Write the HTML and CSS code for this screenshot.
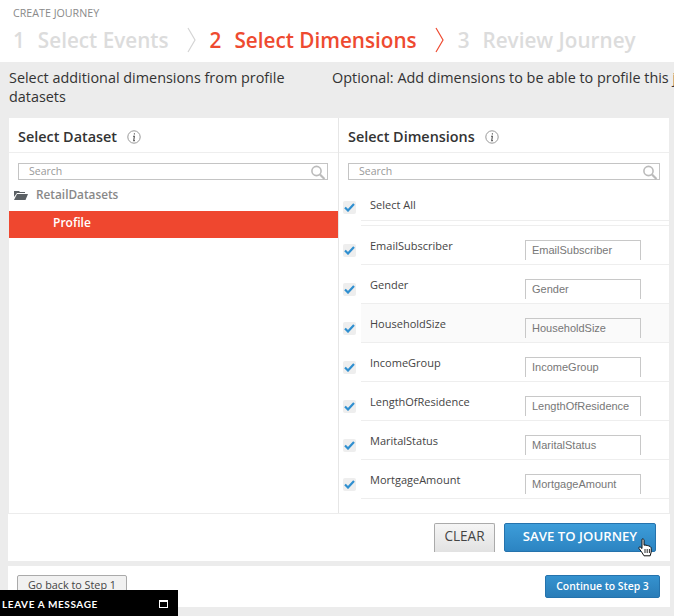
FILE: index.html
```html
<!DOCTYPE html>
<html lang="en">
<head>
  <meta charset="UTF-8" />
  <title>Create Journey</title>
  <link rel="stylesheet" href="styles.css">
</head>
<body>

  <div class="top">
    <div class="crumb">CREATE JOURNEY</div>
    <div class="steps">
      <span class="step step1">1<b>Select Events</b></span>
      <svg class="chev" width="9" height="26" viewBox="0 0 9 26"><path d="M1 1l7 12L1 25" fill="none" stroke="#d4d4d4" stroke-width="1.2"/></svg>
      <span class="step step2 active">2<b>Select Dimensions</b></span>
      <svg class="chev" width="9" height="26" viewBox="0 0 9 26"><path d="M1 1l7 12L1 25" fill="none" stroke="#ee4a30" stroke-width="1.2"/></svg>
      <span class="step step3">3<b>Review Journey</b></span>
    </div>
  </div>

  <div class="main">
    <div class="intro">
      <p class="intro-left">Select additional dimensions from profile datasets</p>
      <p class="intro-right">Optional: Add dimensions to be able to profile this journey</p>
    </div>

    <div class="panel">
      <div class="col col-left">
        <div class="col-head">Select Dataset
          <svg class="info" width="14" height="14" viewBox="0 0 14 14"><circle cx="7" cy="7" r="6.2" fill="none" stroke="#999"/><path d="M7.4 3.2v1.2M6 6.2h1.4l-.7 4.4h1.2" fill="none" stroke="#555" stroke-width="1.1"/></svg>
        </div>
        <div class="search">Search
          <svg class="lens" width="16" height="15" viewBox="0 0 16 15"><circle cx="6.5" cy="6" r="4.6" fill="none" stroke="#bbb" stroke-width="1.6"/><path d="M10 9.5l4.5 4.5" stroke="#bbb" stroke-width="2.2"/></svg>
        </div>
        <div class="folder">
          <svg width="14" height="11" viewBox="0 0 14 11"><path d="M0 2h5l1 1h5v1H3L0 8z" fill="#5b6064"/><path d="M3 5h11l-2.500 6H0z" fill="#5b6064"/></svg>
          RetailDatasets
        </div>
        <div class="dataset">Profile</div>
      </div>

      <div class="col col-right">
        <div class="col-head">Select Dimensions
          <svg class="info" width="14" height="14" viewBox="0 0 14 14"><circle cx="7" cy="7" r="6.2" fill="none" stroke="#999"/><path d="M7.4 3.2v1.2M6 6.2h1.4l-.7 4.4h1.2" fill="none" stroke="#555" stroke-width="1.1"/></svg>
        </div>
        <div class="search search-right">Search
          <svg class="lens" width="16" height="15" viewBox="0 0 16 15"><circle cx="6.5" cy="6" r="4.6" fill="none" stroke="#bbb" stroke-width="1.6"/><path d="M10 9.5l4.5 4.5" stroke="#bbb" stroke-width="2.2"/></svg>
        </div>

        <div class="row row-all">
          <span class="check"><svg width="11" height="9" viewBox="0 0 11 9"><path d="M1 4.500l3 3 6-6.500" fill="none" stroke="#2f8fd0" stroke-width="2.2"/></svg></span>
          <span class="row-name">Select All</span>
        </div>

        <div class="row">
          <span class="check"><svg width="11" height="9" viewBox="0 0 11 9"><path d="M1 4.500l3 3 6-6.500" fill="none" stroke="#2f8fd0" stroke-width="2.2"/></svg></span>
          <span class="row-name">EmailSubscriber</span>
          <span class="alias">EmailSubscriber</span>
        </div>
        <div class="row">
          <span class="check"><svg width="11" height="9" viewBox="0 0 11 9"><path d="M1 4.500l3 3 6-6.500" fill="none" stroke="#2f8fd0" stroke-width="2.2"/></svg></span>
          <span class="row-name">Gender</span>
          <span class="alias">Gender</span>
        </div>
        <div class="row row-hover">
          <span class="check"><svg width="11" height="9" viewBox="0 0 11 9"><path d="M1 4.500l3 3 6-6.500" fill="none" stroke="#2f8fd0" stroke-width="2.2"/></svg></span>
          <span class="row-name">HouseholdSize</span>
          <span class="alias">HouseholdSize</span>
        </div>
        <div class="row">
          <span class="check"><svg width="11" height="9" viewBox="0 0 11 9"><path d="M1 4.500l3 3 6-6.500" fill="none" stroke="#2f8fd0" stroke-width="2.2"/></svg></span>
          <span class="row-name">IncomeGroup</span>
          <span class="alias">IncomeGroup</span>
        </div>
        <div class="row">
          <span class="check"><svg width="11" height="9" viewBox="0 0 11 9"><path d="M1 4.500l3 3 6-6.500" fill="none" stroke="#2f8fd0" stroke-width="2.2"/></svg></span>
          <span class="row-name">LengthOfResidence</span>
          <span class="alias">LengthOfResidence</span>
        </div>
        <div class="row">
          <span class="check"><svg width="11" height="9" viewBox="0 0 11 9"><path d="M1 4.500l3 3 6-6.500" fill="none" stroke="#2f8fd0" stroke-width="2.2"/></svg></span>
          <span class="row-name">MaritalStatus</span>
          <span class="alias">MaritalStatus</span>
        </div>
        <div class="row">
          <span class="check"><svg width="11" height="9" viewBox="0 0 11 9"><path d="M1 4.500l3 3 6-6.500" fill="none" stroke="#2f8fd0" stroke-width="2.2"/></svg></span>
          <span class="row-name">MortgageAmount</span>
          <span class="alias">MortgageAmount</span>
        </div>
      </div>
    </div>

    <div class="actions">
      <button class="btn-clear">CLEAR</button>
      <div class="save-wrap">
        <button class="btn-save">SAVE TO JOURNEY</button>
        <!-- mouse pointer caught in the shot -->
        <svg class="pointer" width="16" height="19" viewBox="0 0 16 19"><path d="M4 1.200c1-.6 2 0 2 1v5l1-.2 1 .2 1.300.3 1.200.3 1.500.6c.8.5 1.200 1.200 1.200 2.200v3.400l-1 3.800H6l-2.500-4L1 10.500c-.5-1 .5-2 1.500-1.300L4 10.500z" fill="#fff" stroke="#111" stroke-width="1"/><path d="M7 11v4M9.200 11v4M11.400 11v4" stroke="#111" stroke-width=".9"/></svg>
      </div>
    </div>

    <div class="nav">
      <button class="btn-back">Go back to Step 1</button>
      <button class="btn-next">Continue to Step 3</button>
    </div>
  </div>

  <!-- chat widget -->
  <div class="chat">
    <span>LEAVE A MESSAGE</span>
    <span class="chat-min"></span>
  </div>

</body>
</html>
```

FILE: styles.css
```css
html, body {
  margin: 0;
  padding: 0;
  height: 616px;
  overflow: hidden;
  font-family: 'Open Sans', sans-serif;
  background: #ececec;
}

.top {
  background: #fff;
  height: 62px;
  padding-left: 13px;
  box-sizing: border-box;
  overflow: hidden;
}

.crumb {
  font-size: 10.7px;
  color: #8a8a8a;
  line-height: 14px;
  padding-top: 6px;
}

.steps {
  display: flex;
  align-items: center;
  height: 40px;
  white-space: nowrap;
}

.step {
  font-size: 20.7px;
  font-weight: 600;
  color: #dcdcdc;
}

.step b {
  font-weight: 600;
  margin-left: 13px;
}

.step.active {
  color: #ee4a30;
}

.chev {
  margin: 0 14px 0 18px;
  flex-shrink: 0;
}

.intro {
  display: flex;
  height: 56px;
  font-size: 14.4px;
  line-height: 19px;
  color: #333;
  padding: 6px 0 0 9px;
  box-sizing: border-box;
  white-space: nowrap;
  overflow: hidden;
}

.intro p {
  margin: 0;
}

.intro-left {
  width: 323px;
  white-space: normal;
  flex-shrink: 0;
}

.panel {
  display: flex;
  margin-left: 9px;
  width: 660px;
  height: 395px;
  background: #fff;
}

.col-left {
  width: 329px;
  border-right: 1px solid #e6e6e6;
}

.col-right {
  flex: 1;
  overflow: hidden;
}

.col-head {
  height: 35px;
  box-sizing: border-box;
  line-height: 37px;
  padding-left: 9px;
  font-size: 14.4px;
  font-weight: 600;
  color: #333;
  border-bottom: 1px solid #eee;
}

.info {
  margin-left: 6px;
  vertical-align: -2px;
}

.search {
  position: relative;
  margin: 10px 0 0 9px;
  width: 310px;
  height: 17px;
  box-sizing: border-box;
  border: 1px solid #c4c4c4;
  font-size: 10.5px;
  line-height: 15px;
  color: #999;
  padding-left: 10px;
}

.lens {
  position: absolute;
  right: 1px;
  top: 1px;
}

.search-right {
  width: 312px;
}

.folder {
  display: flex;
  align-items: center;
  gap: 8px;
  height: 28px;
  padding-left: 5px;
  font-size: 11.8px;
  font-weight: 600;
  color: #888;
}

.dataset {
  margin-top: 3px;
  height: 27px;
  line-height: 24px;
  background: #ef472f;
  color: #fff;
  font-size: 12px;
  font-weight: 600;
  padding-left: 44px;
}

.row {
  display: flex;
  height: 38px;
  border-bottom: 1px solid #eee;
  margin-left: 22px;
  position: relative;
}

.row-hover {
  background: #fafafa;
}

.row-all {
  height: 40px;
  margin-bottom: 4px;
}

.row-all + .row {
  border-top: 1px solid #eee;
}

.check {
  position: absolute;
  left: -18px;
  top: 18px;
  width: 13px;
  height: 13px;
  background: #eee;
  border-radius: 2px;
  display: flex;
  align-items: center;
  justify-content: center;
}

.row-all .check {
  top: 21px;
}

.row-name {
  font-size: 11px;
  color: #444;
  line-height: 15px;
  padding: 12px 0 0 9px;
  width: 164px;
  box-sizing: border-box;
  flex-shrink: 0;
}

.row-all .row-name {
  padding-top: 17px;
}

.alias {
  margin-top: 14px;
  width: 116px;
  height: 20px;
  box-sizing: border-box;
  border: 1px solid #c8c8c8;
  border-bottom: none;
  font-family: 'Liberation Sans', sans-serif;
  font-size: 11px;
  line-height: 19px;
  padding-left: 6px;
  color: #777;
  white-space: nowrap;
  overflow: hidden;
}

.actions {
  display: flex;
  justify-content: flex-end;
  align-items: flex-start;
  gap: 9px;
  margin: 1px 0 0 8px;
  width: 662px;
  height: 47px;
  padding: 9px 14px 0 0;
  box-sizing: border-box;
  background: #fff;
}

.btn-clear {
  width: 61px;
  height: 29px;
  background: linear-gradient(#f5f5f5, #e2e2e2);
  border: 1px solid #aaa;
  border-bottom: none;
  border-radius: 2px 2px 0 0;
  font-family: inherit;
  font-size: 13.6px;
  line-height: 24px;
  color: #444;
  padding: 0 0 5px;
}

.save-wrap {
  position: relative;
}

.btn-save {
  display: block;
  width: 152px;
  height: 29px;
  background: linear-gradient(#3d9dd9, #2c84c2);
  border: 1px solid #2573ad;
  border-radius: 2px;
  color: #fff;
  font-family: inherit;
  font-size: 13.2px;
  font-weight: 600;
  padding: 0 0 3px;
}

.pointer {
  position: absolute;
  left: 134px;
  top: 15px;
}

.nav {
  display: flex;
  justify-content: space-between;
  align-items: flex-start;
  margin: 5px 0 0 8px;
  width: 662px;
  height: 41px;
  padding: 9px 10px 0 9px;
  box-sizing: border-box;
  background: #fff;
}

.btn-back {
  width: 110px;
  height: 24px;
  background: #f1f1f1;
  border: 1px solid #aaa;
  border-radius: 2px;
  font-family: inherit;
  font-size: 10.8px;
  color: #444;
  padding: 0 0 6px;
}

.btn-next {
  width: 115px;
  height: 23px;
  background: linear-gradient(#3592cf, #2a7db8);
  border: 1px solid #2573ad;
  border-radius: 2px;
  color: #fff;
  font-family: inherit;
  font-size: 10.4px;
  font-weight: 600;
  padding: 0 0 2px;
}

.chat {
  position: fixed;
  left: 0;
  bottom: 0;
  width: 178px;
  height: 26px;
  background: #000;
  color: #fff;
  font-family: Lato, sans-serif;
  font-size: 10px;
  font-weight: 700;
  letter-spacing: 0.6px;
  line-height: 28px;
  padding-left: 2px;
  box-sizing: border-box;
}

.chat-min {
  position: absolute;
  left: 159px;
  top: 10px;
  width: 9px;
  height: 8px;
  box-sizing: border-box;
  border: 1px solid #fff;
  border-top-width: 2px;
}
```
